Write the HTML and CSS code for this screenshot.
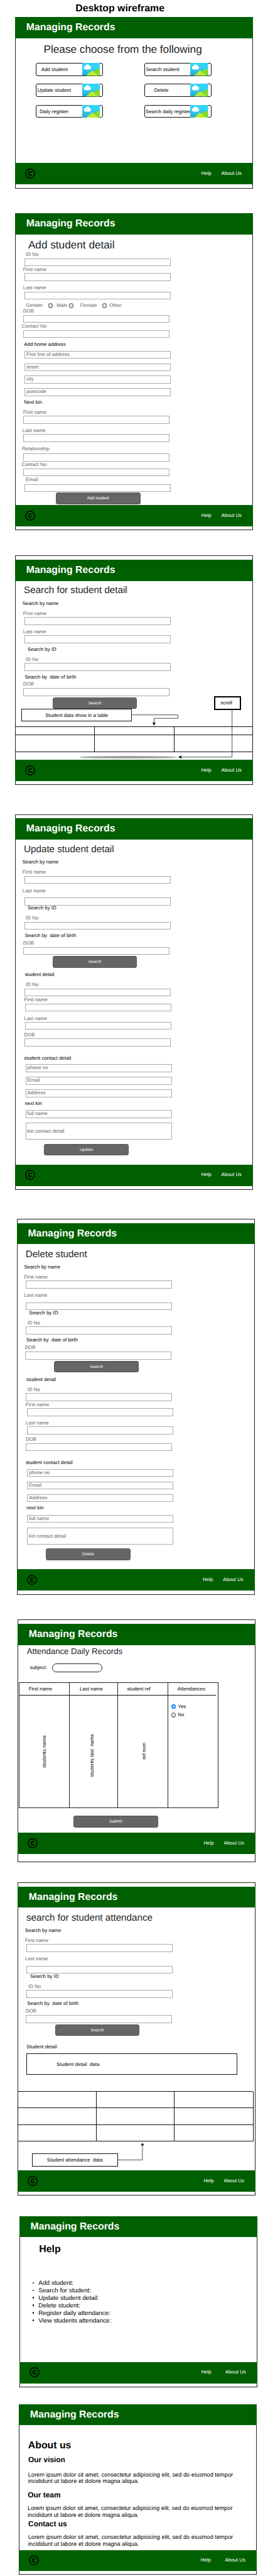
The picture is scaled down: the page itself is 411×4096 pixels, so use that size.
FILE: index.html
```html
<!DOCTYPE html>
<html lang="en">
<head>
<meta charset="utf-8">
<title>Desktop wireframe</title>
<link rel="stylesheet" href="styles.css">
</head>
<body>
<svg class="defs" width="0" height="0" aria-hidden="true">
  <defs>
    <linearGradient id="sky" x1="0" y1="0" x2="0" y2="1"><stop offset=".35" stop-color="#33d3f7"/><stop offset="1" stop-color="#25a6d0"/></linearGradient>
    <symbol id="copy" viewBox="0 0 16 16"><circle cx="8" cy="8" r="7.2" fill="none" stroke="#000" stroke-width="1.4"/><path d="M10.4 6.7A2.6 2.8 0 1 0 10.4 9.3" fill="none" stroke="#000" stroke-width="1.6"/></symbol>
    <symbol id="pic" viewBox="0 0 29 20" preserveAspectRatio="none"><rect width="29" height="20" fill="url(#sky)"/><path d="M17 14.500L23 9.900Q24.700 8.500 26.300 9.500L29 11.500V20H20Z" fill="#86d72f"/><path d="M6 20L14.800 12.200Q16 11.200 17.200 12.200L26 20Z" fill="#b3ee35"/><path d="M5.200 10.400a2.900 2.900 0 0 1-.2-5.700a3.700 3.700 0 0 1 7 0a2.900 2.900 0 0 1-.3 5.700z" fill="#fff"/></symbol>
  </defs>
</svg>
<h1 class="page-title">Desktop wireframe</h1>

<section class="screen s-home">
  <header class="bar">Managing Records</header>
  <main class="body">
    <h2 class="h-big">Please choose from the following</h2>
    <div class="tiles">
      <div class="tile"><span class="t-add">Add student</span><svg><use href="#pic"/></svg></div>
      <div class="tile"><span class="t-search">Search student</span><svg><use href="#pic"/></svg></div>
      <div class="tile"><span class="t-update">Update student</span><svg><use href="#pic"/></svg></div>
      <div class="tile"><span class="t-delete">Delete</span><svg><use href="#pic"/></svg></div>
      <div class="tile"><span class="t-daily">Daily register</span><svg><use href="#pic"/></svg></div>
      <div class="tile"><span class="t-sdaily">Search daily register</span><svg><use href="#pic"/></svg></div>
    </div>
  </main>
  <footer class="foot"><svg class="c"><use href="#copy"/></svg><a>Help</a><a>About Us</a></footer>
</section>

<section class="screen s-add">
  <header class="bar">Managing Records</header>
  <main class="body">
    <h2 class="h-big">Add student detail</h2>
    <label class="x17">ID No</label><div class="in"></div>
    <label class="x13">First name</label><div class="in"></div>
    <label class="x13">Last name</label><div class="in"></div>
    <div class="gender"><label>Gender</label><i class="radio"></i><label>Male</label><i class="radio"></i><label>Female</label><i class="radio"></i><label>Other</label></div>
    <label class="x13">DOB</label><div class="in in-l"></div>
    <label class="x10">Contact No</label><div class="in in-l"></div>
    <h3 class="x14">Add home address</h3>
    <div class="in">First line of address</div>
    <div class="in">street</div>
    <div class="in">city</div>
    <div class="in">postcode</div>
    <h3 class="x14">Next kin</h3>
    <label class="x13">First name</label><div class="in in-l"></div>
    <label class="x12">Last name</label><div class="in in-l"></div>
    <label class="x11">Relationship</label><div class="in in-l"></div>
    <label class="x10">Contact No</label><div class="in in-l"></div>
    <label class="x17">Email</label><div class="in"></div>
    <div class="btn b-add">Add student</div>
  </main>
  <footer class="foot"><svg class="c"><use href="#copy"/></svg><a>Help</a><a>About Us</a></footer>
</section>

<section class="screen s-search">
  <header class="bar">Managing Records</header>
  <main class="body">
    <h2>Search for student detail</h2>
    <h3 class="x12">Search by name</h3>
    <label class="x13">First name</label><div class="in"></div>
    <label class="x13">Last name</label><div class="in"></div>
    <h3 class="x20">Search by ID</h3>
    <label class="x17">ID No</label><div class="in"></div>
    <h3 class="x15">Search by  date of birth</h3>
    <label class="x13">DOB</label><div class="in in-l"></div>
    <div class="btn">Search</div>
    <div class="note">Student data show in a table</div>
    <div class="table"><i></i><i></i><i></i><i></i><i></i><i></i></div>
    <div class="scrollbar"></div>
  </main>
  <footer class="foot"><svg class="c"><use href="#copy"/></svg><a>Help</a><a>About Us</a></footer>
  <div class="scroll-note">scroll</div>
  <svg class="links" viewBox="0 0 379 365.400"><g fill="none" stroke="#000" stroke-width=".7"><path d="M186.600 253.700H259.500V259.200H221.400V266"/><path d="M345.700 246.300V320.800H263"/></g><path d="M221.400 271L218.700 265L221.400 266.400L224.100 265Z"/><path d="M259.700 320.800L265.700 318.100L264.300 320.800L265.700 323.500Z"/></svg>
</section>

<section class="screen s-edit">
  <header class="bar">Managing Records</header>
  <main class="body">
    <h2>Update student detail</h2>
    <h3 class="x12">Search by name</h3>
    <label class="x12">First name</label><div class="in"></div>
    <label class="x12">Last name</label><div class="in"></div>
    <h3 class="x20">Search by ID</h3>
    <label class="x17">ID No</label><div class="in"></div>
    <h3 class="x15">Search by  date of birth</h3>
    <label class="x13">DOB</label><div class="in in-l"></div>
    <div class="btn">Search</div>
    <h3 class="x15">student detail</h3>
    <label class="x17">ID No</label><div class="in"></div>
    <label class="x14">First name</label><div class="in in-r"></div>
    <label class="x14">Last name</label><div class="in in-r"></div>
    <label class="x14">DOB</label><div class="in"></div>
    <h3 class="x14">student contact detail</h3>
    <div class="in in-rr">phone no</div>
    <div class="in in-rr">Email</div>
    <div class="in in-rr">Address</div>
    <h3 class="x15">next kin</h3>
    <div class="in in-rr">full name</div>
    <div class="in in-rr tall">kin contact detail</div>
    <div class="btn b-edit">Update</div>
  </main>
  <footer class="foot"><svg class="c"><use href="#copy"/></svg><a>Help</a><a>About Us</a></footer>
</section>

<section class="screen s-edit s-delete">
  <header class="bar">Managing Records</header>
  <main class="body">
    <h2>Delete student</h2>
    <h3 class="x12">Search by name</h3>
    <label class="x12">First name</label><div class="in"></div>
    <label class="x12">Last name</label><div class="in"></div>
    <h3 class="x20">Search by ID</h3>
    <label class="x17">ID No</label><div class="in"></div>
    <h3 class="x15">Search by  date of birth</h3>
    <label class="x13">DOB</label><div class="in in-l"></div>
    <div class="btn">Search</div>
    <h3 class="x15">student detail</h3>
    <label class="x17">ID No</label><div class="in"></div>
    <label class="x14">First name</label><div class="in in-r"></div>
    <label class="x14">Last name</label><div class="in in-r"></div>
    <label class="x14">DOB</label><div class="in"></div>
    <h3 class="x14">student contact detail</h3>
    <div class="in in-rr">phone no</div>
    <div class="in in-rr">Email</div>
    <div class="in in-rr">Address</div>
    <h3 class="x15">next kin</h3>
    <div class="in in-rr">full name</div>
    <div class="in in-rr tall">kin contact detail</div>
    <div class="btn b-edit">Delete</div>
  </main>
  <footer class="foot"><svg class="c"><use href="#copy"/></svg><a>Help</a><a>About Us</a></footer>
</section>

<section class="screen s-daily">
  <header class="bar">Managing Records</header>
  <main class="body">
    <h2>Attendance Daily Records</h2>
    <div class="subject"><span>subject:</span><i class="pill"></i></div>
    <div class="register">
      <div class="col"><div class="th">First name</div><div class="td"><span class="v1">students name</span></div></div>
      <div class="col"><div class="th">Last name</div><div class="td"><span class="v2">students last  name</span></div></div>
      <div class="col"><div class="th">student ref</div><div class="td"><span class="v3">ref nom</span></div></div>
      <div class="col"><div class="th">Attendances</div><div class="choices"><div><i class="radio on"></i>Yes</div><div><i class="radio"></i>No</div></div></div>
    </div>
    <div class="btn b-submit">Submit</div>
  </main>
  <footer class="foot"><svg class="c"><use href="#copy"/></svg><a>Help</a><a>About Us</a></footer>
</section>

<section class="screen s-att">
  <header class="bar">Managing Records</header>
  <main class="body">
    <h2>search for student attendance</h2>
    <h3 class="x12">Search by name</h3>
    <label class="x12">First name</label><div class="in"></div>
    <label class="x12">Last name</label><div class="in"></div>
    <h3 class="x20">Search by ID</h3>
    <label class="x17">ID No</label><div class="in"></div>
    <h3 class="x15">Search by  date of birth</h3>
    <label class="x13">DOB</label><div class="in in-l"></div>
    <div class="btn">Search</div>
    <h3 class="x14">Student detail</h3>
    <div class="detail">Student detail  data</div>
    <div class="table-row"><div class="table3"><i></i><i></i><i></i><i></i><i></i><i></i><i></i><i></i><i></i></div></div>
    <div class="note">Student attendance  data</div>
  </main>
  <footer class="foot"><svg class="c"><use href="#copy"/></svg><a>Help</a><a>About Us</a></footer>
  <svg class="links" viewBox="0 0 379 497.900"><path d="M159.600 441.400H198.900V419" fill="none" stroke="#000" stroke-width=".7"/><path d="M198.900 414.300L201.600 418.700L198.900 418.200L196.200 418.700Z"/></svg>
</section>

<section class="screen s-help">
  <header class="bar">Managing Records</header>
  <main class="body">
    <h2>Help</h2>
    <ul><li>Add student:</li><li>Search for student:</li><li>Update student detail:</li><li>Delete student:</li><li>Register daily attendance:</li><li>View students attendance:</li></ul>
  </main>
  <footer class="foot"><svg class="c"><use href="#copy"/></svg><a>Help</a><a>About Us</a></footer>
</section>

<section class="screen s-about">
  <header class="bar">Managing Records</header>
  <main class="body">
    <h2>About us</h2>
    <h4>Our vision</h4>
    <p>Lorem ipsum dolor sit amet, consectetur adipisicing elit, sed do eiusmod tempor<br>incididunt ut labore et dolore magna aliqua.</p>
    <h4 class="l">Our team</h4>
    <p class="l">Lorem ipsum dolor sit amet, consectetur adipisicing elit, sed do eiusmod tempor<br>incididunt ut labore et dolore magna aliqua.</p>
    <h4>Contact us</h4>
    <p>Lorem ipsum dolor sit amet, consectetur adipisicing elit, sed do eiusmod tempor<br>incididunt ut labore et dolore magna aliqua.</p>
  </main>
  <footer class="foot"><svg class="c"><use href="#copy"/></svg><a>Help</a><a>About Us</a></footer>
</section>
</body>
</html>
```
FILE: styles.css
```css
* { box-sizing: border-box; }
body {
  margin: 0;
  height: 4096px;
  overflow: hidden;
  background: #fff;
  color: #000;
  font: 7.93px/10px "Liberation Sans", Arial, sans-serif;
  text-rendering: geometricPrecision;
}
h1, h2, h3, h4, p, ul { margin: 0; padding: 0; font-weight: 400; }
.defs { display: block; }
.page-title { height: 27.2px; padding: 4.2px 0 0 120.2px; font-size: 15.85px; line-height: 20px; font-weight: 700; white-space: nowrap; }

/* frame, header bar and footer bar shared by all screens */
.screen { position: relative; width: 379px; margin-left: 23.9px; box-shadow: inset 0 0 0 1px #222; }
.bar { height: 33.8px; padding-left: 17.9px; background: #005f00; color: #fff; font-size: 15.85px; line-height: 33.8px; font-weight: 700; }
.foot { display: grid; grid-template-columns: 280.6px 32px auto; align-items: center; height: 33.8px; padding: 0 0 1px 16px; background: #005f00; color: #fff; white-space: nowrap; }
.foot .c { width: 16px; height: 16px; }

/* stacked form: every row ends at the bottom edge of its item */
.body { display: grid; align-items: end; }
.body h2 { margin-left: 14.2px; font-size: 15.2px; line-height: 20px; color: #212529; white-space: nowrap; }
.body .h-big { margin-left: 21px; font-size: 17.2px; }
h3 { font-size: 7.93px; line-height: 10px; white-space: pre; }
label { color: #666; white-space: nowrap; }
.x10 { margin-left: 10.6px; }
.x11 { margin-left: 11.2px; }
.x12 { margin-left: 11.9px; }
.x13 { margin-left: 12.9px; }
.x14 { margin-left: 14.4px; }
.x15 { margin-left: 15.5px; }
.x17 { margin-left: 17.2px; }
.x20 { margin-left: 20.1px; }
.in { width: 233px; height: 12.5px; margin-left: 14.7px; padding-left: 2.300px; border: 1px solid #aaa; color: #666; line-height: 10.5px; }
.in-l { margin-left: 13.4px; }
.in-r { margin-left: 16px; }
.in-rr { margin-left: 16.8px; padding-left: 1.900px; }
.in.tall { height: 27.200px; line-height: 25.200px; }
.btn { width: 134.8px; height: 18.500px; margin-left: 59.800px; border: 1px solid #555; border-radius: 3px; background: #666; color: #fff; font-size: 6.6px; line-height: 17px; text-align: center; }
.btn.b-add { margin-left: 65px; }
.btn.b-edit { margin-left: 46.4px; }
.btn.b-submit { margin-left: 89.1px; }
.radio { display: block; width: 7.400px; height: 7.400px; border: 1px solid #333; border-radius: 50%; background: #e4e4e4; }
.radio.on { border: 2px solid #0d86ff; background: #fff; }
.links { position: absolute; left: 0; top: 0; width: 100%; height: 100%; }

/* home */
.s-home { height: 272.700px; }
.s-home .body { display: block; height: 198.400px; padding-top: 6.600px; }
.s-home .body .h-big { margin-left: 45.6px; }
.tiles { display: grid; grid-template-columns: 107px 107px; grid-auto-rows: 20.4px; gap: 12.800px 65.5px; margin: 12.600px 0 0 33.200px; }
.tile { display: flex; border: 1px solid #111; border-radius: 3px; line-height: 19px; white-space: nowrap; }
.tile span { width: 72.500px; }
.tile svg { flex: none; width: 28.6px; height: 20.4px; margin-top: -1px; position: relative; }
.tile .t-add { padding-left: 7.600px; }
.tile .t-search { padding-left: 1.900px; }
.tile .t-update { padding-left: 1.400px; }
.tile .t-delete { padding-left: 15px; }
.tile .t-daily { padding-left: 4.800px; }
.tile .t-sdaily { padding-left: 1.300px; }

/* add student */
.s-add { height: 504.5px; margin-top: 39.1px; }
.s-add .body { grid-template-rows: 26.300px 11px 13px 10.900px 13px 16.100px 13.100px 14.700px 9.400px 13px 10.900px 13.100px 16.100px 17px 19.900px 19.800px 20px 14.900px 15.900px 13.100px 16.100px 13px 16.100px 14.500px 10.900px 13px 10.900px 13.700px 19.500px 1.700px; }
.gender { display: grid; grid-template-columns: 35.400px 13.200px 19.800px 17.800px 35.300px 11px auto; align-items: center; margin-left: 17.700px; }

/* search student */
.s-search { height: 365.400px; margin-top: 39.600px; padding-top: 6.800px; }
.s-search .body { grid-template-rows: 25.800px 15.400px 15.800px 13.100px 16.300px 12.800px 15px 16px 12.800px 15px 11.800px 13.100px 20.500px 19.900px 48.800px 10.200px 2.400px; }
.note { width: 176.400px; height: 20.300px; margin-left: 10.2px; border: 1px solid #111; background: #fff; line-height: 19px; text-align: center; white-space: pre; }
.table { display: grid; grid-template: 13px 28px / 127.300px 127.300px auto; height: 41px; }
.table i { border: solid #111; border-width: 1px 1px 1px 0; margin: 0 0 -1px; }
.table i:nth-child(n+4) { margin: 0; }
.scrollbar { width: 157px; height: 4.400px; margin-left: 102.400px; border-radius: 50%; background: #a0a0a0; }
.scroll-note { position: absolute; left: 317.600px; top: 223.800px; width: 42.800px; height: 22.500px; border: 2.500px solid #000; background: #fff; padding-left: 7.800px; line-height: 17.500px; }

/* update and delete student */
.s-edit { height: 597.600px; margin-top: 46.200px; padding-top: 6.400px; }
.s-edit .body { grid-template-rows: 26.300px 15.300px 15.800px 12.900px 16.400px 18.100px 9.900px 15.900px 12.800px 14.800px 11.800px 13.300px 20.700px 16.700px 15.900px 12.900px 11.100px 12.800px 16.400px 12.900px 13.500px 12.900px 24.100px 16.900px 19.900px 19.900px 15.200px 18.100px 34.600px 24.800px 14.600px; }
.s-delete { margin-left: 26.500px; margin-top: 45.900px; }

/* daily register */
.s-daily { height: 385.600px; margin: 39.300px 0 0 27.800px; padding-top: 6.700px; }
.s-daily .body { display: block; height: 298.700px; padding-top: .4px; }
.s-daily .body h2 { margin-left: 14.900px; font-size: 13.2px; }
.subject { display: flex; align-items: center; gap: 8.200px; height: 14px; margin: 9.100px 0 0 19.700px; }
.pill { width: 80.500px; height: 13.800px; border: 1px solid #222; border-radius: 7px; }
.register { display: grid; grid-template-columns: 80.200px 76.500px 79.700px 80px; width: 317.400px; height: 200px; margin: 15.700px 0 0 2.400px; border: 1px solid #222; border-left: 0; }
.col { border-left: 1px solid #222; }
.th { height: 20px; border-bottom: 1px solid #111; line-height: 20px; padding-left: 14.500px; }
.col:nth-child(2) .th { padding-left: 15.500px; }
.col:nth-child(4) .th { padding-left: 15.300px; margin-right: 3px; }
.td { display: flex; height: 178px; align-items: center; }
.td span { writing-mode: vertical-rl; transform: rotate(180deg); white-space: pre; line-height: 10px; }
.v1 { margin: 0 0 0 35px; }
.v2 { margin: 13px 0 0 30.600px; }
.v3 { margin: 0 0 0 36.700px; }
.choices { display: grid; grid-template-rows: 13.300px 13.300px; padding: 11.200px 0 0 5.500px; }
.choices div { display: flex; align-items: center; gap: 2.900px; }
.b-submit { margin-top: 12.400px; }

/* attendance search */
.s-att { height: 497.900px; margin: 32.600px 0 0 27.800px; padding-top: 6.400px; }
.s-att .body { grid-template-rows: 26.300px 15px 16.200px 13px 16.100px 18.400px 9.400px 15.900px 13.200px 14.600px 11.800px 13.300px 20.600px 23.300px 38.400px 106.500px 39.700px 6.400px; }
.s-att .note { width: 136.900px; height: 20.700px; margin-left: 22.900px; }
.detail { width: 336px; height: 34px; margin-left: 14.700px; padding-left: 46.600px; border: 1px solid #111; line-height: 33px; white-space: pre; }
.table3 { display: grid; grid-template: repeat(3, 1fr) / 125.300px 124.300px 125.200px; width: 374.800px; height: 80.500px; border: solid #111; border-width: 1px 0 0 1px; }
.table3 i { border: solid #111; border-width: 0 1px 1px 0; }

/* help */
.s-help { height: 272.800px; margin: 32.600px 0 0 30.700px; }
.s-help .body { display: block; height: 198.600px; padding-top: 9.900px; }
.s-help .body h2, .s-about .body h2 { font-size: 15.85px; font-weight: 700; color: #000; margin-left: 31.600px; }
.s-help ul { margin: 37.400px 0 0 30.700px; list-style: none; font-size: 9.910px; line-height: 11.950px; }
.s-help li::before { content: ""; display: inline-block; width: 2.600px; height: 2.600px; margin: 0 6.900px 0 -9.500px; border-radius: 50%; background: #000; vertical-align: 1.600px; }
.s-help .foot, .s-about .foot { grid-template-columns: 273.800px 38.600px auto; }

/* about */
.s-about { height: 271.700px; margin: 26.100px 0 0 29.900px; }
.s-about .body { height: 198.200px; grid-template-rows: 42.700px 19.600px 32.200px 23.700px 29.600px 16.900px 29.100px; align-content: start; }
.s-about .body h2 { margin-left: 14.900px; }
.s-about h4 { margin-left: 15.200px; font-size: 11.900px; line-height: 16px; font-weight: 700; }
.s-about p { margin-left: 14.800px; font-size: 9.260px; line-height: 10.600px; white-space: nowrap; }
.s-about h4.l { margin-left: 14.400px; }
.s-about p.l { margin-left: 14.100px; }
```
